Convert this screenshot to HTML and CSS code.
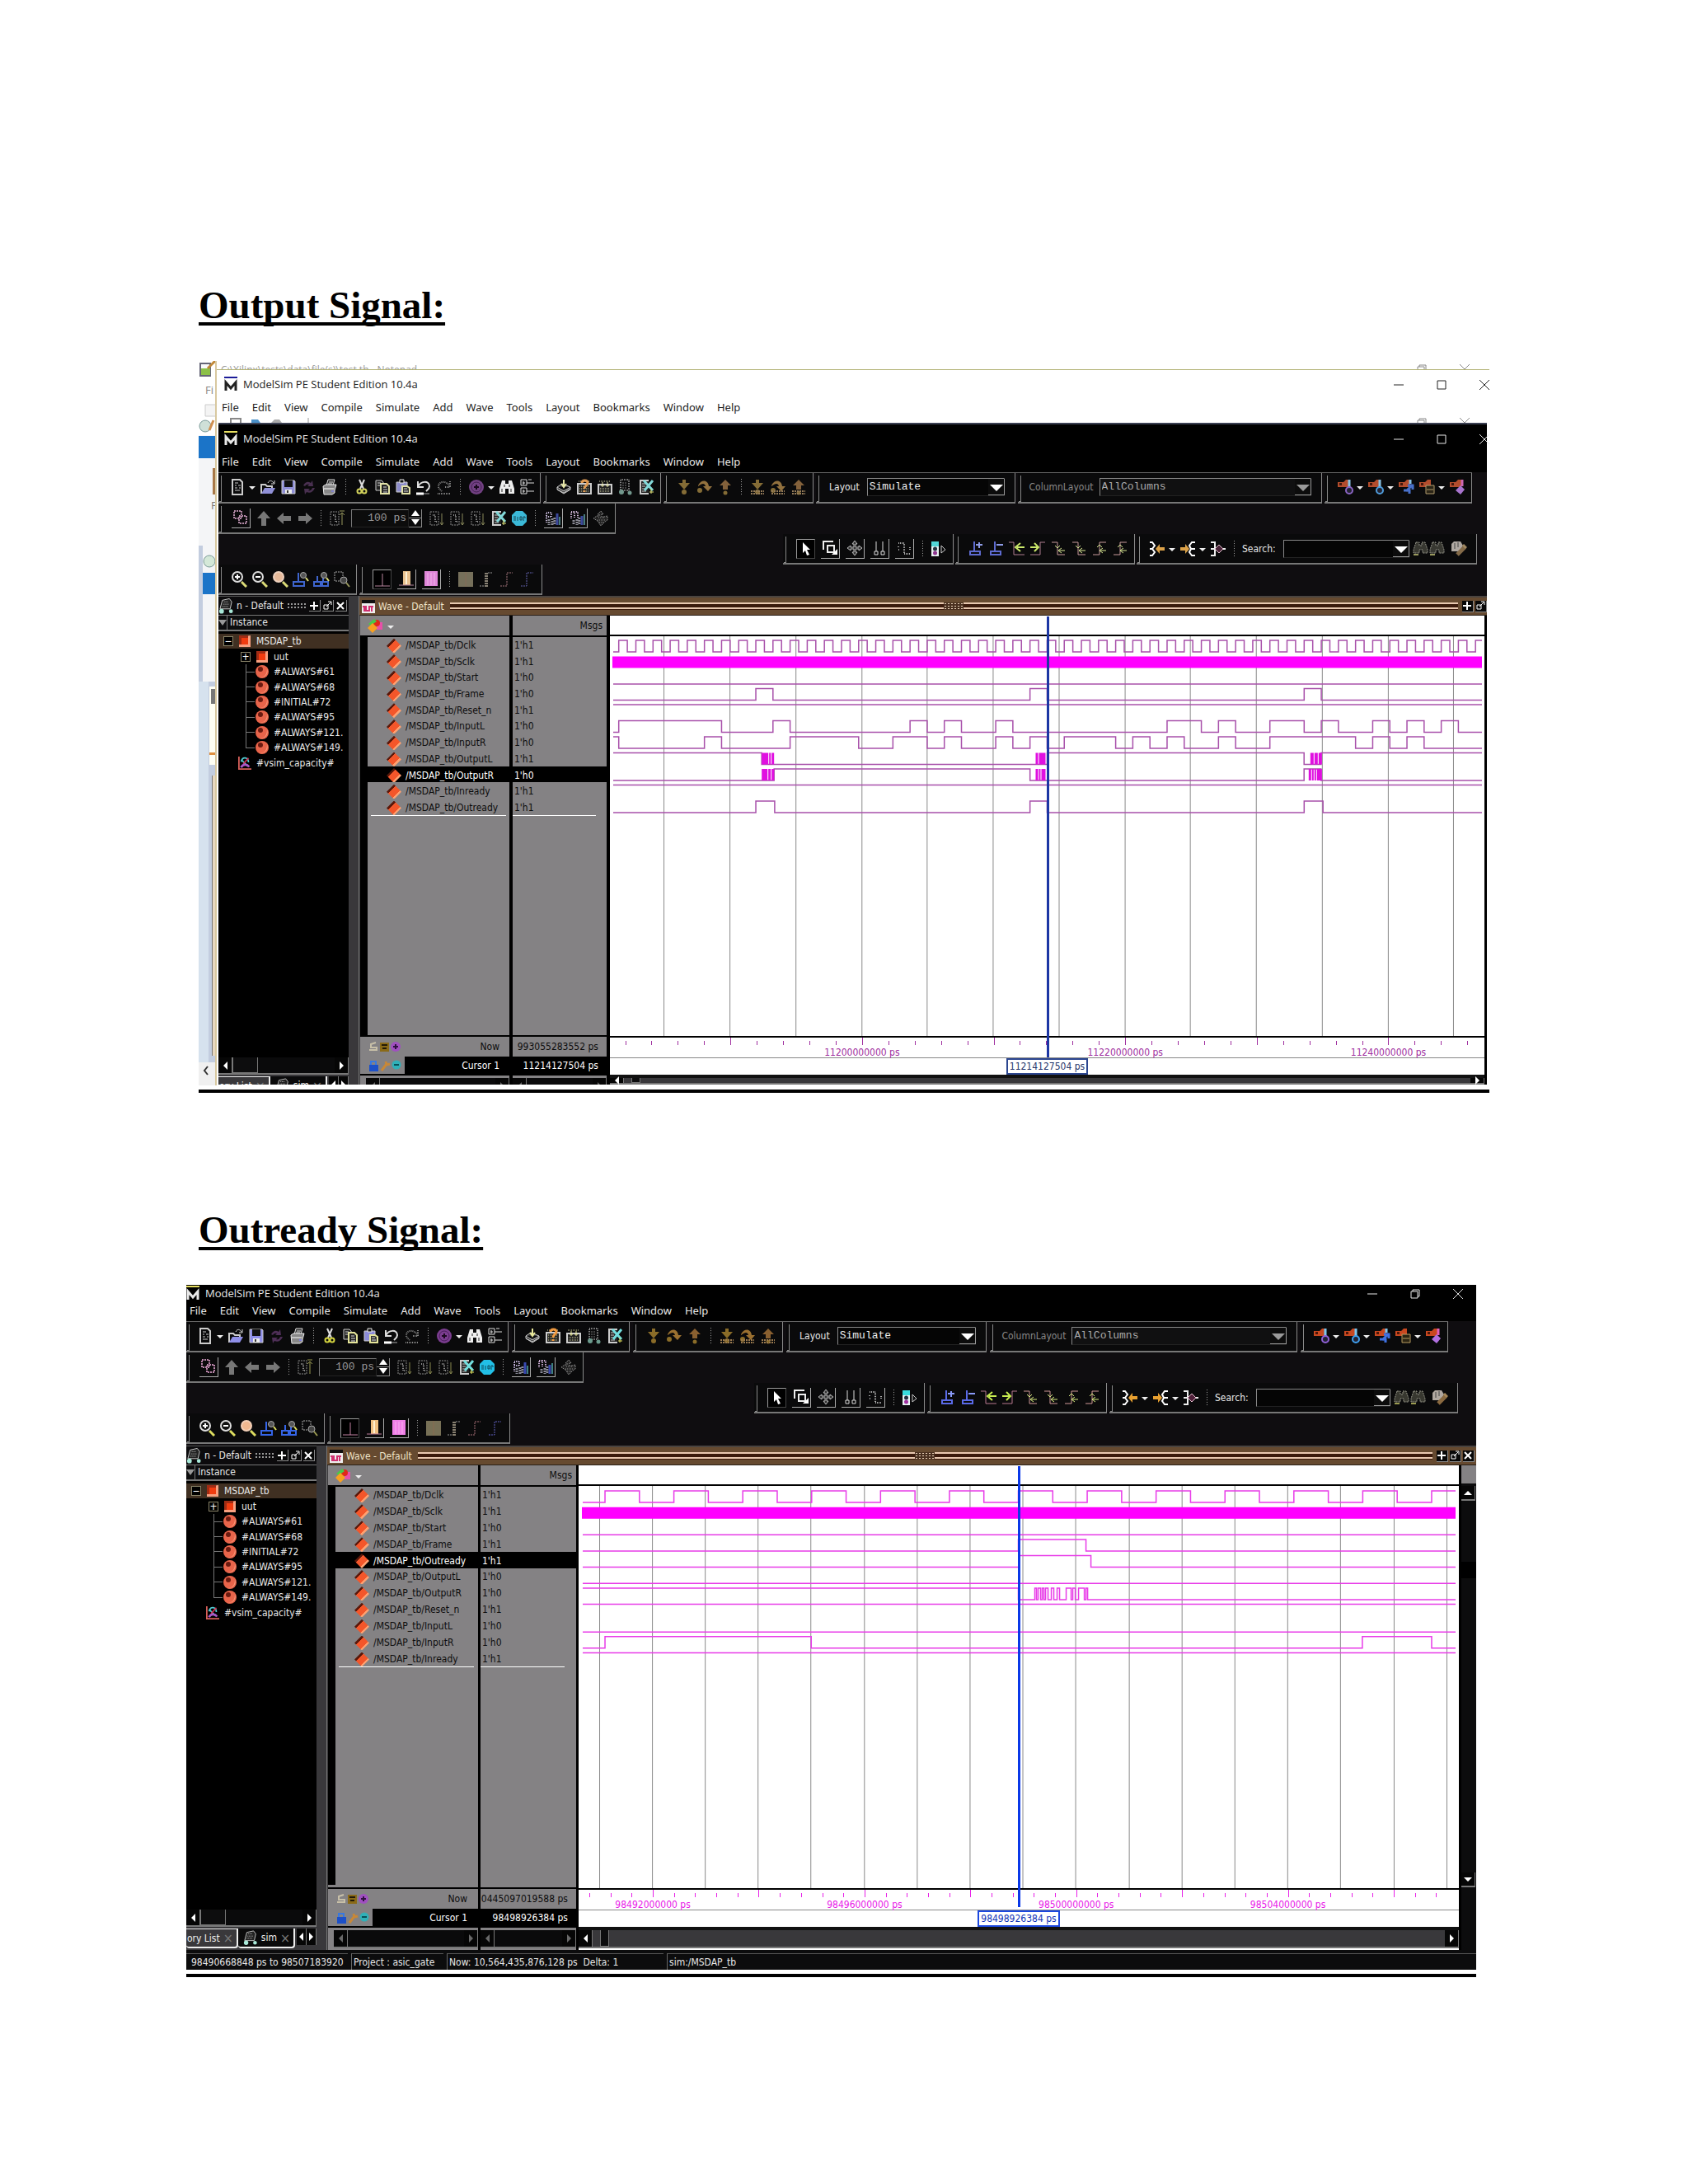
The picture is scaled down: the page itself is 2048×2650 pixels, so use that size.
FILE: index.html
```html
<!DOCTYPE html>
<html lang="en">
<head>
    <meta charset="UTF-8">
    <meta name="viewport" content="width=device-width, initial-scale=1.0">
    <title>Output and Outready Signals</title>
    <link rel="stylesheet" href="styles.css">
</head>
<body>
    <!-- Icon set -->
    <svg class="sprite" aria-hidden="true">
        <symbol id="i-logo" viewBox="0 0 16 18"><path class="bar" d="M0 0h16v2H0z"/><path fill="none" stroke="currentColor" stroke-width="3" d="M2 17V7l6 7 6-7v10"/></symbol>
        <symbol id="i-min" viewBox="0 0 12 12"><path d="M0 6h12" stroke="currentColor"/></symbol>
        <symbol id="i-max" viewBox="0 0 12 12"><path d="M1 1h10v10H1z" fill="none" stroke="currentColor"/></symbol>
        <symbol id="i-restore" viewBox="0 0 12 12"><path d="M1 3h8v8H1zM3 3V1h8v8H9" fill="none" stroke="currentColor"/></symbol>
        <symbol id="i-close" viewBox="0 0 12 12"><path d="M0 0l12 12M12 0L0 12" stroke="currentColor"/></symbol>

        <symbol id="i-new" viewBox="0 0 20 20"><path d="M4 1h9l3 3v15H4z" fill="none" stroke="#ccc" stroke-width="2"/><path d="M7 5h4M7 8h2m2 0h3M7 11h3m2 0h2M7 14h6" stroke="#ccc"/></symbol>
        <symbol id="i-open" viewBox="0 0 20 20"><path d="M2 18V7h5l2 2h6v3" fill="none" stroke="#ccc" stroke-width="2"/><path d="M2 18l4-7h13l-4 7z" fill="#8f8fe8"/><path d="M10 5c2-4 5-3 7 0m1-3v4h-4" fill="none" stroke="#ddd"/></symbol>
        <symbol id="i-save" viewBox="0 0 20 20"><path d="M2 2h15l1 1v15H2z" fill="#8f8fe8" stroke="#ccc"/><path d="M5 2h10v8H5z" fill="#111"/><path d="M6 13h8v5H6z" fill="#eee"/><path d="M8 14h2v3H8z" fill="#333"/></symbol>
        <symbol id="i-reload" viewBox="0 0 20 20"><path d="M3 8c3-5 6-5 9-3l2-3 1 7H8l2-2C7 6 6 8 5 9zM17 11c-2 5-6 7-10 5l-2 3-1-7h7l-2 2c3 1 4-1 5-3z" fill="#4d2e56"/></symbol>
        <symbol id="i-print" viewBox="0 0 20 20"><path d="M6 8l2-7h8l-2 7" fill="#333" stroke="#ddd"/><path d="M9 4h5M8 6h5" stroke="#ddd"/><path d="M2 9l3-2h13l-2 7v3l-3 2H3z" fill="#888" stroke="#eee"/><path d="M3 12h12" stroke="#fff"/><path d="M12 15h3" stroke="#7f7fe0" stroke-width="2"/></symbol>
        <symbol id="i-cut" viewBox="0 0 20 20"><path d="M7 1l5 11M13 1L8 12" stroke="#ddd" stroke-width="2"/><circle cx="7" cy="15" r="2.5" fill="none" stroke="#d5d540" stroke-width="2"/><circle cx="13" cy="15" r="2.5" fill="none" stroke="#d5d540" stroke-width="2"/></symbol>
        <symbol id="i-copy" viewBox="0 0 20 20"><path d="M2 2h7l2 2v10H2z" fill="#222" stroke="#ccc"/><path d="M8 6h7l3 3v9H8z" fill="#222" stroke="#e4e49a" stroke-width="2"/><path d="M4 5h4M4 8h3M11 10h4M11 13h5M11 16h5" stroke="#ddd"/></symbol>
        <symbol id="i-paste" viewBox="0 0 20 20"><path d="M2 4h13v12H2z" fill="#8b8bd8" stroke="#ccc"/><path d="M6 1h5v4H6z" fill="#111" stroke="#eee"/><path d="M9 9h6l3 2v7H9z" fill="#333" stroke="#e4e49a" stroke-width="2"/><path d="M11 12h4M11 15h5" stroke="#ddd"/></symbol>
        <symbol id="i-undo" viewBox="0 0 20 20"><path d="M3 3v7h7M3 10c3-8 14-8 14-1 0 3-2 4-4 6" fill="none" stroke="#ddd" stroke-width="2"/><path d="M1 18h9" stroke="#fff" stroke-width="3"/><path d="M10 18h7" stroke="#aaa"/></symbol>
        <symbol id="i-redo" viewBox="0 0 20 20"><path d="M17 3v7h-7M17 10C14 2 3 2 3 9c0 3 2 4 4 6M2 18h16" fill="none" stroke="#888" stroke-width="2" stroke-dasharray="1 1"/></symbol>
        <symbol id="i-add" viewBox="0 0 20 20"><circle cx="10" cy="10" r="9" fill="#7b3d90"/><circle cx="10" cy="10" r="6" fill="none" stroke="#4a1d5c"/><path d="M10 7v6M7 10h6" stroke="#1b0820" stroke-width="2"/></symbol>
        <symbol id="i-find" viewBox="0 0 20 20"><path d="M4 2h4v4h4V2h4l3 10v6h-7v-6H8v6H1v-6z" fill="#eee"/><path d="M7 7v3m6-3v3M4 12v4m11-4v4" stroke="#222"/></symbol>
        <symbol id="i-tree" viewBox="0 0 20 20"><path d="M2 1h7v7H2zM2 11h7v7H2zM9 5h9M9 15h9M5 3v4M4 5h3M5 13v4M4 15h3M11 1h4" fill="none" stroke="#ddd"/></symbol>
        <symbol id="i-compile" viewBox="0 0 20 20"><path d="M2 10l6-4 10 4-8 5zM2 10v3l8 5 8-5v-3M2 13l8 4 8-5" fill="#333" stroke="#ccc"/><path d="M10 1v8M7 6l3 4 3-4" fill="none" stroke="#e8e89a" stroke-width="2"/></symbol>
        <symbol id="i-ask" viewBox="0 0 20 20"><path d="M2 6h16v12H2z" fill="#222" stroke="#ccc" stroke-width="2"/><path d="M3 3h14M4 9h12M4 12h12M4 15h12" stroke="#d8d8a0" stroke-dasharray="1 1"/><path d="M7 5c0-4 7-4 7 0 0 3-4 3-4 7m0 2v2" fill="none" stroke="#f09a40" stroke-width="3"/></symbol>
        <symbol id="i-build" viewBox="0 0 20 20"><path d="M2 7h16v11H2z" fill="#222" stroke="#ccc" stroke-width="2"/><path d="M3 3h14M4 12h12M4 15h12" stroke="#d8d8a0" stroke-dasharray="1 1"/><path d="M7 4v6m6-6v6M5 8h4m2 0h4" stroke="#e8e89a"/></symbol>
        <symbol id="i-sim" viewBox="0 0 20 20"><path d="M4 1h10v13H4z" fill="none" stroke="#888" stroke-width="2" stroke-dasharray="1 1"/><path d="M7 4v9m3-9v9" stroke="#777" stroke-dasharray="2 1"/><circle cx="5" cy="16" r="3" fill="#6b9a8c"/><circle cx="15" cy="17" r="2.5" fill="#6b9a8c"/></symbol>
        <symbol id="i-break" viewBox="0 0 20 20"><path d="M13 2H3v16h10" fill="#222" stroke="#ccc" stroke-width="2"/><path d="M5 6h6M5 9h4M5 12h6M5 15h5" stroke="#ccc"/><path d="M7 2l11 12M18 2L8 14" stroke="#72dede" stroke-width="3"/><path d="M16 12v6m-2-2h5" stroke="#e8e860"/></symbol>
        <symbol id="i-into" viewBox="0 0 20 20"><path d="M8 1h4v4h5l-7 8-7-8h5z" fill="#8a6c28"/><circle cx="10" cy="16" r="3" fill="#8a6c28"/></symbol>
        <symbol id="i-over" viewBox="0 0 20 20"><path d="M2 8c4-8 12-7 13 1h4l-5 6-6-6h3c-1-4-4-4-9 0z" fill="#9a7030"/><circle cx="4" cy="14" r="3" fill="#8a6c28"/></symbol>
        <symbol id="i-out" viewBox="0 0 20 20"><path d="M10 1l7 7h-4v5H7V8H3z" fill="#8a6030"/><circle cx="10" cy="17" r="2.5" fill="#8a6c28"/></symbol>
        <symbol id="i-base" viewBox="0 0 20 20"><path d="M2 15h16M2 18h16" stroke="#9b7b50" stroke-width="2" stroke-dasharray="2 1"/></symbol>
        <symbol id="i-thermo" viewBox="0 0 20 20"><path d="M1 4h7l3-3h4v9H1z" fill="#c84820"/><path d="M3 5h3v3H3z" fill="#4a1608"/><path d="M15 1v9" stroke="#7cc4ee" stroke-width="3"/><circle cx="15" cy="14" r="4" stroke="currentColor" stroke-width="2" fill="#223"/></symbol>
        <symbol id="i-thermo-edit" viewBox="0 0 20 20"><path d="M1 4h7l3-3h4v9H1z" fill="#c84820"/><path d="M3 5h3v3H3z" fill="#4a1608"/><path d="M15 1v5" stroke="#7cc4ee" stroke-width="3"/><path d="M18 7l-8 8M7 14h7v4M12 8h6v5" stroke="#3f70e0" stroke-width="3" fill="none"/></symbol>
        <symbol id="i-thermo-save" viewBox="0 0 20 20"><path d="M1 4h7l3-3h4v9H1z" fill="#c84820"/><path d="M3 5h3v3H3z" fill="#4a1608"/><path d="M9 8h10v10H9z" fill="#2b2412" stroke="#b89c60"/><path d="M10 13h8" stroke="#b89c60"/></symbol>
        <symbol id="i-thermo-star" viewBox="0 0 20 20"><path d="M1 4h7l3-3h4v9H1z" fill="#c84820"/><path d="M3 5h3v3H3z" fill="#4a1608"/><path d="M14 8l5 5-5 6-6-5z" fill="#b070e0"/><path d="M16 1v8" stroke="#e060c0" stroke-width="3"/></symbol>

        <symbol id="i-restart" viewBox="0 0 20 20"><path d="M2 2h9v9H2zM8 8h9v9H8z" fill="none" stroke="#b884a8" stroke-width="2" stroke-dasharray="2 1"/></symbol>
        <symbol id="i-up" viewBox="0 0 20 20"><path d="M10 1l8 9h-5v9H7v-9H2z" fill="#777"/></symbol>
        <symbol id="i-left" viewBox="0 0 20 20"><path d="M1 10l8-7v4h9v6H9v4z" fill="#777"/></symbol>
        <symbol id="i-right" viewBox="0 0 20 20"><path d="M19 10l-8-7v4H2v6h9v4z" fill="#777"/></symbol>
        <symbol id="i-run" viewBox="0 0 20 20"><path d="M2 2h10v16H2z" fill="none" stroke="#888" stroke-dasharray="2 1"/><path d="M5 6h3v8h3" fill="none" stroke="#888" stroke-width="2" stroke-dasharray="1 1"/><path d="M16 4v14m-2-3l2 3 2-3" fill="none" stroke="#8a8a50"/></symbol>
        <symbol id="i-runup" viewBox="0 0 20 20"><path d="M2 2h10v16H2z" fill="none" stroke="#888" stroke-dasharray="2 1"/><path d="M5 6h3v8h3" fill="none" stroke="#888" stroke-width="2" stroke-dasharray="1 1"/><path d="M16 18V3M13 6l3-3 3 3M13 1h6" fill="none" stroke="#9a9a50"/></symbol>
        <symbol id="i-stop" viewBox="0 0 20 20"><path d="M6 1h8l5 5v8l-5 5H6l-5-5V6z" fill="#22bfe6"/><path d="M3 8h3M3 10h3M3 12h3M8 8v5M11 8h2v4h-2zM15 13V8h2v2" fill="none" stroke="#0b4a5c"/></symbol>
        <symbol id="i-profile" viewBox="0 0 20 20"><path d="M2 16V4h6v5H2" fill="none" stroke="#c0b0d8" stroke-width="2" stroke-dasharray="1 1"/><path d="M5 12v7m4-8v8m3-9v9" stroke="#8a8a98" stroke-width="3" stroke-dasharray="2 1"/><path d="M15 5v14" stroke="#3848b0" stroke-width="3"/><path d="M18 9v10" stroke="#3f8080" stroke-width="2"/></symbol>
        <symbol id="i-memory" viewBox="0 0 20 20"><path d="M2 11V3h4v7m0-7h4v8" fill="none" stroke="#d0b0d8" stroke-width="2" stroke-dasharray="1 1"/><path d="M5 13v6m4-7v7m3-9v9" stroke="#8a8a98" stroke-width="3" stroke-dasharray="2 1"/><path d="M15 8v11" stroke="#3848b0" stroke-width="3"/><path d="M18 6v13" stroke="#3f8080" stroke-width="2"/></symbol>
        <symbol id="i-diamond" viewBox="0 0 20 20"><path d="M10 1l3 4h-2v3h3l4-1v5l-3 2-5 5-4-6-5-3 4-3h3V5H6z" fill="#222" stroke="#888" stroke-dasharray="2 1"/><path d="M7 9h7M6 12h9M8 15h5" stroke="#888" stroke-dasharray="1 1"/></symbol>

        <symbol id="i-pointer" viewBox="0 0 20 20"><path d="M6 2l9 9h-4l3 6-3 1-2-6-3 3z" fill="#fff"/></symbol>
        <symbol id="i-zoombox" viewBox="0 0 20 20"><path d="M2 12V2h12M7 7h8v8H7z" fill="none" stroke="#eee" stroke-width="2"/><path d="M12 18h7v-7z" fill="#fff"/></symbol>
        <symbol id="i-pan" viewBox="0 0 20 20"><path d="M10 1l3 4h-2v4h4V7l4 3-4 3v-2h-4v4h2l-3 4-3-4h2v-4H5v2l-4-3 4-3v2h4V5H7z" fill="#333" stroke="#bbb"/></symbol>
        <symbol id="i-cursors" viewBox="0 0 20 20"><path d="M6 2v12m8-12v12M4 14h4v4H4zM12 14h4v4h-4z" fill="none" stroke="#ddd"/></symbol>
        <symbol id="i-edit" viewBox="0 0 20 20"><path d="M3 4h7v13h8M3 12h2M3 8v1M17 9v3" fill="none" stroke="#aaa" stroke-width="2" stroke-dasharray="1 1"/></symbol>
        <symbol id="i-lights" viewBox="0 0 20 20"><path d="M1 1h9v18H1z" fill="#e8f4f4"/><path d="M1 1h9v6H1z" fill="#38dede"/><circle cx="5.500" cy="10" r="2.500" fill="#203040"/><circle cx="5.500" cy="15" r="2.500" fill="#a030a0"/><path d="M13 6v9l5-4z" fill="none" stroke="#ccc"/></symbol>
        <symbol id="i-curadd" viewBox="0 0 20 20"><path d="M8 1v12M3 13h12v4H3z" fill="none" stroke="#5a6ae8" stroke-width="2"/><path d="M14 2v7m-4-4h8" stroke="#8a9af8" stroke-width="2"/></symbol>
        <symbol id="i-curdel" viewBox="0 0 20 20"><path d="M8 1v12M3 13h12v4H3z" fill="none" stroke="#5a6ae8" stroke-width="2"/><path d="M10 5h8" stroke="#8a9af8" stroke-width="2"/></symbol>
        <symbol id="i-prev" viewBox="0 0 20 20"><path d="M0 2h6v15h13" fill="none" stroke="#b87890"/><path d="M19 8h-9m4-5L8 8l6 5" fill="none" stroke="#c8ec50" stroke-width="2"/></symbol>
        <symbol id="i-next" viewBox="0 0 20 20"><path d="M19 2h-6v15H1" fill="none" stroke="#b87890"/><path d="M1 8h9M6 3l5 5-5 5" fill="none" stroke="#c8ec50" stroke-width="2"/></symbol>
        <symbol id="i-fall" viewBox="0 0 20 20"><path d="M2 2h7v15h9" fill="none" stroke="#d09898"/><path d="M18 12h-7m3-3l-4 3 4 3M6 6l3 3 3-3" fill="none" stroke="#d8ec80"/></symbol>
        <symbol id="i-rise" viewBox="0 0 20 20"><path d="M2 17h8V2h8" fill="none" stroke="#d09898"/><path d="M18 12h-7m3-3l-4 3 4 3M7 8l3-3 3 3" fill="none" stroke="#d8ec80"/></symbol>
        <symbol id="i-expand" viewBox="0 0 20 20"><path d="M1 2h3l3 4-3 4 3 4-3 4H1M1 10h3" fill="none" stroke="#fff" stroke-width="2"/><path d="M8 10l5-6v4h6v4h-6v4z" fill="#e8a030"/></symbol>
        <symbol id="i-collapse" viewBox="0 0 20 20"><path d="M19 2h-4l-3 4 2 4-2 4 3 4h4M14 10h5" fill="none" stroke="#fff" stroke-width="2"/><path d="M12 10L7 4v4H1v4h6v4z" fill="#e8a030"/></symbol>
        <symbol id="i-branch" viewBox="0 0 20 20"><path d="M1 2h5v16H1M1 10h18" fill="none" stroke="#eee" stroke-width="2"/><path d="M11 5l5 5-5 5-5-5z" fill="#50203a" stroke="#e8c0d0"/></symbol>
        <symbol id="i-findoff" viewBox="0 0 20 20"><path d="M4 2h4v4h3V2h4l3 9v4h-6v-4H8v4H1v-4z" fill="#383830" stroke="#98988a" stroke-dasharray="2 1"/><path d="M1 17h6" stroke="#9a9a50" stroke-width="2"/></symbol>
        <symbol id="i-wrench" viewBox="0 0 20 20"><path d="M1 4l3-3h8l3 5-4 7H1z" fill="#b0a8a0"/><path d="M5 3v7M9 2v6" stroke="#444"/><path d="M8 17l9-9" stroke="#8a6a40" stroke-width="5"/><path d="M15 5l4 4" stroke="#a88858" stroke-width="3"/></symbol>

        <symbol id="i-zoom" viewBox="0 0 20 20"><circle cx="8" cy="7" r="6" fill="#111" stroke="#ddd" stroke-width="2"/><path d="M13 13l6 6" stroke="#dede60" stroke-width="3"/></symbol>
        <symbol id="i-zoomfull" viewBox="0 0 20 20"><circle cx="8" cy="7" r="6" fill="#f0b890" stroke="#f4d0b8" stroke-width="2"/><path d="M13 13l6 6" stroke="#dede60" stroke-width="3"/></symbol>
        <symbol id="i-zoomcur" viewBox="0 0 20 20"><path d="M7 2v11M1 13h13v5H1z" fill="none" stroke="#3565e8" stroke-width="2"/><circle cx="13" cy="5" r="3.500" fill="#555" stroke="#aaa"/><path d="M16 8l3 4" stroke="#dede60" stroke-width="2"/></symbol>
        <symbol id="i-zoomcurs" viewBox="0 0 20 20"><path d="M5 6v7M12 8v5M1 13h8v5H1zM11 13h7v5h-7z" fill="none" stroke="#3565e8" stroke-width="2"/><circle cx="13" cy="5" r="3.500" fill="#555" stroke="#aaa"/><path d="M16 8l3 4" stroke="#dede60" stroke-width="2"/></symbol>
        <symbol id="i-zoomlast" viewBox="0 0 20 20"><path d="M1 12V1h10v11z" fill="none" stroke="#aaa" stroke-dasharray="2 1"/><circle cx="12" cy="11" r="4" fill="#444" stroke="#aaa"/><path d="M15 14l4 5" stroke="#9a9a50" stroke-width="2"/></symbol>
        <symbol id="i-w1" viewBox="0 0 20 20"><path d="M1 18h18" stroke="#c080a0"/><path d="M10 3v15" stroke="#c080a0"/></symbol>
        <symbol id="i-w2" viewBox="0 0 20 20"><path d="M6 1h9v17H6z" fill="#f0c080"/><path d="M10 2v15" stroke="#fff0d0" stroke-width="2"/><path d="M1 18h18" stroke="#c080a0"/></symbol>
        <symbol id="i-w3" viewBox="0 0 20 20"><path d="M2 1h16v18H2z" fill="#f080e8"/><path d="M6 3v15m4-15v15m4-15v15" stroke="#f8b0f0"/></symbol>
        <symbol id="i-w4" viewBox="0 0 20 20"><path d="M1 1h18v18H1z" fill="#777056"/><path d="M10 1v18" stroke="#8a6a50"/></symbol>
        <symbol id="i-w5" viewBox="0 0 20 20"><path d="M2 18h6M12 2h6" stroke="#999" stroke-dasharray="2 1"/><path d="M10 2v17" stroke="#888070" stroke-width="4" stroke-dasharray="2 1"/></symbol>
        <symbol id="i-w6" viewBox="0 0 20 20"><path d="M2 18h8V2h7" fill="none" stroke="#a87078" stroke-dasharray="2 1"/></symbol>
        <symbol id="i-w7" viewBox="0 0 20 20"><path d="M2 18h7V2h8" fill="none" stroke="#6060c0" stroke-dasharray="2 1"/></symbol>

        <symbol id="i-car" viewBox="0 0 20 20"><path d="M5 3l9-2 3 4-2 9H2z" fill="#222" stroke="#ccc"/><path d="M7 5h6M6 8h7M5 11h7" stroke="#ccc" stroke-dasharray="1 1"/><circle cx="4" cy="17" r="3" fill="#a8e8d8"/><circle cx="16" cy="17" r="2.500" fill="#a8e8d8"/></symbol>
        <symbol id="i-plus" viewBox="0 0 12 12"><path d="M6 1v10M1 6h10" stroke="#fff" stroke-width="2"/></symbol>
        <symbol id="i-undock" viewBox="0 0 12 12"><path d="M2 5h5v5H2zM5 7l5-5M7 1h4v4" fill="none" stroke="#fff"/></symbol>
        <symbol id="i-x" viewBox="0 0 12 12"><path d="M2 2l8 8M10 2l-8 8" stroke="#fff" stroke-width="2"/></symbol>
        <symbol id="i-wave" viewBox="0 0 16 16"><path d="M0 0h16v16H0z" fill="#eee"/><path d="M0 0h16v4H0z" fill="#111"/><path d="M1 8h4v5h4V8h5M3 14V9M12 8v6" fill="none" stroke="#d03070" stroke-width="2"/></symbol>
        <symbol id="i-objects" viewBox="0 0 20 18"><path d="M12 5h7v9h-7z" fill="#e850a8"/><circle cx="12" cy="6" r="4" fill="#e02818"/><path d="M2 7l7-6 3 3-7 5z" fill="#48c848"/><path d="M7 6l6 6-6 6-6-6z" fill="#f8a020"/></symbol>
        <symbol id="i-module" viewBox="0 0 14 14"><path d="M0 2L14 0v14H0z" fill="#f8a080"/><path d="M3 3h8v8H3z" fill="#f03c10"/><path d="M0 0h11v3H3v8H0z" fill="#a02c14"/></symbol>
        <symbol id="i-process" viewBox="0 0 16 16"><circle cx="8" cy="8" r="8" fill="#e8644a"/><circle cx="6" cy="5" r="3" fill="#6a1a10"/><path d="M14 4a8 8 0 01-9 11c6 0 9-4 9-11z" fill="#f89878"/></symbol>
        <symbol id="i-capacity" viewBox="0 0 18 18"><path d="M1 0v17h17" fill="none" stroke="#d8605a" stroke-width="2"/><path d="M4 7c2-8 10-6 10 1M4 4l9 9" fill="none" stroke="#50c8d0" stroke-width="2"/><path d="M14 2L7 10" stroke="#d03050" stroke-width="2"/><path d="M4 15c2-5 8-5 11-1" fill="none" stroke="#a858c8" stroke-width="3"/></symbol>
        <symbol id="i-footnow" viewBox="0 0 40 14"><path d="M1 11h9V8H3V4l6-2" fill="none" stroke="#c8c0a8" stroke-width="2"/><path d="M14 2h11v11H14z" fill="#8a6a18"/><path d="M16 5h7M17 9h5" stroke="#221a08" stroke-width="2"/><circle cx="33" cy="7" r="6" fill="#a050c0"/><path d="M33 4v6m-3-3h6" stroke="#301040" stroke-width="2"/></symbol>
        <symbol id="i-footcur" viewBox="0 0 40 14"><path d="M1 6h11v8H1z" fill="#1c50c8"/><path d="M3 6V2h6v4" fill="none" stroke="#3878e0" stroke-width="2"/><path d="M16 13l6-8M21 2l1 4 4-1" fill="none" stroke="#c88838" stroke-width="3"/><circle cx="34" cy="6" r="5.500" fill="#30b0b8"/><path d="M31 6h6" stroke="#085058" stroke-width="2"/></symbol>
    </svg>

    <!-- Toolbars, shared by every simulator window -->
    <template id="toolbar-rows">
        <div class="tool-row row-main">
            <div class="group first">
                <button class="tool" aria-label="New"><svg><use href="#i-new"/></svg></button><span class="drop"></span>
                <button class="tool" aria-label="Open"><svg><use href="#i-open"/></svg></button>
                <button class="tool" aria-label="Save"><svg><use href="#i-save"/></svg></button>
                <button class="tool" aria-label="Reload"><svg><use href="#i-reload"/></svg></button>
                <button class="tool" aria-label="Print"><svg><use href="#i-print"/></svg></button>
                <span class="sep"></span>
                <button class="tool" aria-label="Cut"><svg><use href="#i-cut"/></svg></button>
                <button class="tool" aria-label="Copy"><svg><use href="#i-copy"/></svg></button>
                <button class="tool" aria-label="Paste"><svg><use href="#i-paste"/></svg></button>
                <button class="tool" aria-label="Undo"><svg><use href="#i-undo"/></svg></button>
                <button class="tool" aria-label="Redo"><svg><use href="#i-redo"/></svg></button>
                <span class="sep"></span>
                <button class="tool" aria-label="Add"><svg><use href="#i-add"/></svg></button><span class="drop"></span>
                <button class="tool" aria-label="Find"><svg><use href="#i-find"/></svg></button>
                <button class="tool" aria-label="Expand tree"><svg><use href="#i-tree"/></svg></button>
            </div>
            <div class="group">
                <button class="tool" aria-label="Compile"><svg><use href="#i-compile"/></svg></button>
                <button class="tool" aria-label="Compile out of date"><svg><use href="#i-ask"/></svg></button>
                <button class="tool" aria-label="Compile all"><svg><use href="#i-build"/></svg></button>
                <button class="tool" aria-label="Simulate"><svg><use href="#i-sim"/></svg></button>
                <button class="tool" aria-label="Break"><svg><use href="#i-break"/></svg></button>
            </div>
            <div class="group">
                <button class="tool" aria-label="Step into"><svg><use href="#i-into"/></svg></button>
                <button class="tool" aria-label="Step over"><svg><use href="#i-over"/></svg></button>
                <button class="tool" aria-label="Step out"><svg><use href="#i-out"/></svg></button>
                <span class="sep"></span>
                <button class="tool" aria-label="Step into current"><svg><use href="#i-into"/><use href="#i-base"/></svg></button>
                <button class="tool" aria-label="Step over current"><svg><use href="#i-over"/><use href="#i-base"/></svg></button>
                <button class="tool" aria-label="Step out current"><svg><use href="#i-out"/><use href="#i-base"/></svg></button>
            </div>
            <div class="group group-layout">
                <label class="pick">Layout <span class="combo"><select><option>Simulate</option></select></span></label>
            </div>
            <div class="group group-columns">
                <label class="pick dim">ColumnLayout <span class="combo"><select disabled><option>AllColumns</option></select></span></label>
            </div>
            <div class="group">
                <button class="tool violet" aria-label="Add bookmark"><svg><use href="#i-thermo"/></svg></button><span class="drop"></span>
                <button class="tool sky" aria-label="Go to bookmark"><svg><use href="#i-thermo"/></svg></button><span class="drop"></span>
                <button class="tool" aria-label="Edit bookmark"><svg><use href="#i-thermo-edit"/></svg></button>
                <button class="tool" aria-label="Save bookmark"><svg><use href="#i-thermo-save"/></svg></button><span class="drop"></span>
                <button class="tool" aria-label="Bookmarks"><svg><use href="#i-thermo-star"/></svg></button>
            </div>
        </div>
        <div class="tool-row">
            <div class="group">
                <button class="tool bevel" aria-label="Restart"><svg><use href="#i-restart"/></svg></button>
                <button class="tool" aria-label="Up"><svg><use href="#i-up"/></svg></button>
                <button class="tool" aria-label="Back"><svg><use href="#i-left"/></svg></button>
                <button class="tool" aria-label="Forward"><svg><use href="#i-right"/></svg></button>
                <span class="sep"></span>
                <button class="tool" aria-label="Run length"><svg><use href="#i-runup"/></svg></button>
                <span class="stepper"><input class="run-time" aria-label="Run time" value="100 ps"><span class="spin"></span></span>
                <button class="tool" aria-label="Run"><svg><use href="#i-run"/></svg></button>
                <button class="tool" aria-label="Continue run"><svg><use href="#i-run"/></svg></button>
                <button class="tool" aria-label="Run all"><svg><use href="#i-run"/></svg></button>
                <button class="tool" aria-label="Break run"><svg><use href="#i-break"/></svg></button>
                <button class="tool" aria-label="Stop"><svg><use href="#i-stop"/></svg></button>
                <span class="sep"></span>
                <button class="tool bevel" aria-label="Performance profiling"><svg><use href="#i-profile"/></svg></button>
                <button class="tool bevel" aria-label="Memory profiling"><svg><use href="#i-memory"/></svg></button>
                <button class="tool" aria-label="Edit breakpoints"><svg><use href="#i-diamond"/></svg></button>
            </div>
        </div>
        <div class="tool-row row-wave">
            <div class="group">
                <button class="tool bevel pressed" aria-label="Select mode"><svg><use href="#i-pointer"/></svg></button>
                <button class="tool bevel" aria-label="Zoom mode"><svg><use href="#i-zoombox"/></svg></button>
                <button class="tool bevel" aria-label="Pan mode"><svg><use href="#i-pan"/></svg></button>
                <button class="tool bevel" aria-label="Two cursor mode"><svg><use href="#i-cursors"/></svg></button>
                <button class="tool bevel" aria-label="Edit mode"><svg><use href="#i-edit"/></svg></button>
                <span class="sep"></span>
                <button class="tool" aria-label="Stop drawing"><svg><use href="#i-lights"/></svg></button>
            </div>
            <div class="group">
                <button class="tool" aria-label="Insert cursor"><svg><use href="#i-curadd"/></svg></button>
                <button class="tool" aria-label="Delete cursor"><svg><use href="#i-curdel"/></svg></button>
                <button class="tool" aria-label="Previous transition"><svg><use href="#i-prev"/></svg></button>
                <button class="tool" aria-label="Next transition"><svg><use href="#i-next"/></svg></button>
                <button class="tool" aria-label="Previous falling edge"><svg><use href="#i-fall"/></svg></button>
                <button class="tool" aria-label="Next falling edge"><svg><use href="#i-fall"/></svg></button>
                <button class="tool" aria-label="Previous rising edge"><svg><use href="#i-rise"/></svg></button>
                <button class="tool" aria-label="Next rising edge"><svg><use href="#i-rise"/></svg></button>
            </div>
            <div class="group group-search">
                <button class="tool" aria-label="Expand time"><svg><use href="#i-expand"/></svg></button><span class="drop"></span>
                <button class="tool" aria-label="Collapse time"><svg><use href="#i-collapse"/></svg></button><span class="drop"></span>
                <button class="tool" aria-label="Expanded mode"><svg><use href="#i-branch"/></svg></button>
                <span class="sep"></span>
                <label class="pick">Search: <span class="combo"><input class="search"></span></label>
                <button class="tool tight" aria-label="Search backward"><svg><use href="#i-findoff"/></svg></button>
                <button class="tool tight" aria-label="Search forward"><svg><use href="#i-findoff"/></svg></button>
                <button class="tool wide" aria-label="Search options"><svg><use href="#i-wrench"/></svg></button>
            </div>
        </div>
        <div class="tool-row">
            <div class="group">
                <button class="tool" aria-label="Zoom in"><svg><use href="#i-zoom"/><path d="M8 4v6M5 7h6" stroke="#fff" stroke-width="2"/></svg></button>
                <button class="tool" aria-label="Zoom out"><svg><use href="#i-zoom"/><path d="M5 7h6" stroke="#fff" stroke-width="2"/></svg></button>
                <button class="tool" aria-label="Zoom full"><svg><use href="#i-zoomfull"/></svg></button>
                <button class="tool" aria-label="Zoom in on cursor"><svg><use href="#i-zoomcur"/></svg></button>
                <button class="tool" aria-label="Zoom between cursors"><svg><use href="#i-zoomcurs"/></svg></button>
                <button class="tool" aria-label="Zoom other window"><svg><use href="#i-zoomlast"/></svg></button>
            </div>
            <div class="group">
                <button class="tool bevel pressed" aria-label="No drivers"><svg><use href="#i-w1"/></svg></button>
                <button class="tool bevel" aria-label="Single driver"><svg><use href="#i-w2"/></svg></button>
                <button class="tool bevel" aria-label="All drivers"><svg><use href="#i-w3"/></svg></button>
                <span class="sep"></span>
                <button class="tool" aria-label="Show region"><svg><use href="#i-w4"/></svg></button>
                <button class="tool" aria-label="Show delta"><svg><use href="#i-w5"/></svg></button>
                <button class="tool" aria-label="Show event"><svg><use href="#i-w6"/></svg></button>
                <button class="tool" aria-label="Show edge"><svg><use href="#i-w7"/></svg></button>
            </div>
        </div>
    </template>

    <!-- Design hierarchy tree -->
    <template id="instance-tree">
        <div class="pane-title">
            <svg class="car"><use href="#i-car"/></svg><span class="pane-name">n - Default</span><span class="grip"></span>
            <button class="mini" aria-label="Zoom pane"><svg><use href="#i-plus"/></svg></button>
            <button class="mini" aria-label="Undock pane"><svg><use href="#i-undock"/></svg></button>
            <button class="mini" aria-label="Close pane"><svg><use href="#i-x"/></svg></button>
        </div>
        <div class="instance"><span class="sort"></span>Instance</div>
        <ul class="tree">
            <li class="top"><span class="box">−</span><svg class="mod"><use href="#i-module"/></svg>MSDAP_tb</li>
            <li class="child"><span class="box">+</span><svg class="mod"><use href="#i-module"/></svg>uut</li>
            <li class="child"><span class="twig"></span><svg><use href="#i-process"/></svg>#ALWAYS#61</li>
            <li class="child"><span class="twig"></span><svg><use href="#i-process"/></svg>#ALWAYS#68</li>
            <li class="child"><span class="twig"></span><svg><use href="#i-process"/></svg>#INITIAL#72</li>
            <li class="child"><span class="twig"></span><svg><use href="#i-process"/></svg>#ALWAYS#95</li>
            <li class="child"><span class="twig"></span><svg><use href="#i-process"/></svg>#ALWAYS#121.</li>
            <li class="child last"><span class="twig"></span><svg><use href="#i-process"/></svg>#ALWAYS#149.</li>
            <li class="leaf"><svg><use href="#i-capacity"/></svg>#vsim_capacity#</li>
        </ul>
        <div class="hscroll"><span class="arrow left"></span><span class="thumb"></span><span class="arrow right"></span></div>
        <div class="tabs">
            <a class="tab" href="#memory">ory List <span class="tab-x">×</span></a>
            <a class="tab current" href="#sim"><svg><use href="#i-car"/></svg>sim <span class="tab-x">×</span></a>
            <span class="tab-nav"><span class="arrow left"></span><span class="arrow right"></span></span>
        </div>
    </template>

    <main class="document">
        <h1>Output Signal:</h1>

        <figure class="shot desktop">
            <svg class="behind" viewBox="0 0 24 879" aria-hidden="true">
                <path fill="#f4f5f7" d="M0 0h24v879H0z"/>
                <path fill="#fff" d="M0 0h24v90H0z"/>
                <path fill="#fafafa" stroke="#667" stroke-width="2" d="M2 3h12v15H2z"/><path fill="#8cc048" d="M3 9h11v8H3z"/><path stroke="#c08838" stroke-width="3" d="M11 9l9-9"/>
                <text x="8" y="40" font-size="13" fill="#888">Fi</text>
                <path fill="#f4f4f4" stroke="#ccc" d="M8 53h16v14H8z"/>
                <circle cx="8" cy="79" r="7" fill="#cfe0d8" stroke="#7a9a98"/><path stroke="#d09050" stroke-width="3" d="M13 84l5-12"/>
                <path fill="#1b74c8" d="M0 91h20v27H0z"/>
                <path fill="#a87848" d="M17 130h3v32h-3z"/>
                <text x="15" y="180" font-size="13" fill="#777">F</text>
                <path fill="#c3cddf" d="M0 224h5v655H0z"/>
                <circle cx="13" cy="243" r="7" fill="#d4e8d8" stroke="#7a9a98"/>
                <path fill="#1b74c8" d="M5 257h15v26H5z"/>
                <path fill="#c3cddf" d="M5 389h15v490H5z"/>
                <path fill="#d6e2ee" d="M0 389h12v490H0z"/>
                <path fill="#fffff4" d="M13 395h7v95h-7z"/><path fill="#777" d="M15 398h5v18h-5z"/>
                <path fill="#e09040" d="M13 475h7v3h-7z"/>
                <path fill="#777" d="M16 503h1v340h-1z"/><path fill="#e8d8c0" d="M17 503h3v340h-3z"/>
                <path fill="#f0f0f0" d="M0 851h20v28H0z"/><path fill="none" stroke="#333" stroke-width="2" d="M11 856l-4 5 4 5"/>
            </svg>
            <div class="stack">
                <div class="behind-title">C:\Xilinx\tests\data\file(s)\test.th - Notepad
                    <span class="ghosts"><svg><use href="#i-restore"/></svg><svg><use href="#i-close"/></svg></span>
                </div>
                <section class="window light">
                    <header class="title"><svg class="logo"><use href="#i-logo"/></svg>ModelSim PE Student Edition 10.4a
                        <span class="controls">
                            <button aria-label="Minimize"><svg><use href="#i-min"/></svg></button>
                            <button aria-label="Maximize"><svg><use href="#i-max"/></svg></button>
                            <button aria-label="Close"><svg><use href="#i-close"/></svg></button>
                        </span>
                    </header>
                    <nav class="menu"><a href="#">File</a><a href="#">Edit</a><a href="#">View</a><a href="#">Compile</a><a href="#">Simulate</a><a href="#">Add</a><a href="#">Wave</a><a href="#">Tools</a><a href="#">Layout</a><a href="#">Bookmarks</a><a href="#">Window</a><a href="#">Help</a></nav>
                    <div class="sliver">
                        <svg class="sliver-icons" viewBox="0 0 120 6"><path d="M17 1h12v6H17z" fill="none" stroke="#888" stroke-width="2"/><path d="M42 6V2h8l3 4z" fill="#4a90c8"/><path d="M66 6l4-4h6l3 4z" fill="#aaa"/><path d="M111 0v6" stroke="#999"/></svg>
                        <span class="ghosts"><svg><use href="#i-restore"/></svg><svg><use href="#i-close"/></svg></span>
                    </div>
                </section>
                <section class="window dark output">
                    <header class="title"><svg class="logo"><use href="#i-logo"/></svg>ModelSim PE Student Edition 10.4a
                        <span class="controls">
                            <button aria-label="Minimize"><svg><use href="#i-min"/></svg></button>
                            <button aria-label="Maximize"><svg><use href="#i-max"/></svg></button>
                            <button aria-label="Close"><svg><use href="#i-close"/></svg></button>
                        </span>
                    </header>
                    <nav class="menu"><a href="#">File</a><a href="#">Edit</a><a href="#">View</a><a href="#">Compile</a><a href="#">Simulate</a><a href="#">Add</a><a href="#">Wave</a><a href="#">Tools</a><a href="#">Layout</a><a href="#">Bookmarks</a><a href="#">Window</a><a href="#">Help</a></nav>
                    <div class="toolbars"></div>
                    <div class="panes">
                        <aside class="sim-pane"></aside>
                        <section class="wave-pane">
                            <div class="wave-title"><svg><use href="#i-wave"/></svg>Wave - Default<span class="ridge"></span>
                                <button class="mini" aria-label="Zoom wave"><svg><use href="#i-plus"/></svg></button>
                                <button class="mini" aria-label="Undock wave"><svg><use href="#i-undock"/></svg></button>
                            </div>
                            <div class="wave-body">
                                <div class="signals">
                                    <table class="list">
                                        <thead><tr><th><svg class="objects"><use href="#i-objects"/></svg><span class="drop"></span></th><th>Msgs</th></tr></thead>
                                        <tbody>
                                            <tr><td>/MSDAP_tb/Dclk</td><td>1'h1</td></tr>
                                            <tr><td>/MSDAP_tb/Sclk</td><td>1'h1</td></tr>
                                            <tr><td>/MSDAP_tb/Start</td><td>1'h0</td></tr>
                                            <tr><td>/MSDAP_tb/Frame</td><td>1'h0</td></tr>
                                            <tr><td>/MSDAP_tb/Reset_n</td><td>1'h1</td></tr>
                                            <tr><td>/MSDAP_tb/InputL</td><td>1'h0</td></tr>
                                            <tr><td>/MSDAP_tb/InputR</td><td>1'h0</td></tr>
                                            <tr><td>/MSDAP_tb/OutputL</td><td>1'h1</td></tr>
                                            <tr class="selected"><td>/MSDAP_tb/OutputR</td><td>1'h0</td></tr>
                                            <tr><td>/MSDAP_tb/Inready</td><td>1'h1</td></tr>
                                            <tr><td>/MSDAP_tb/Outready</td><td>1'h1</td></tr>
                                        </tbody>
                                    </table>
                                    <div class="end-mark"><span></span><span></span></div>
                                    <table class="times">
                                        <tr class="now"><td><svg><use href="#i-footnow"/></svg>Now</td><td>993055283552 ps</td></tr>
                                        <tr class="cursor-row"><td><svg><use href="#i-footcur"/></svg>Cursor 1</td><td>11214127504 ps</td></tr>
                                    </table>
                                    <div class="scrolls"><div class="hscroll"><span class="arrow left"></span><span class="arrow right"></span></div><div class="hscroll"><span class="arrow left"></span><span class="arrow right"></span></div></div>
                                </div>
                                <div class="waves">
                                    <div class="wave-head"></div>
                                    <svg class="plot" data-plot="output" preserveAspectRatio="none"></svg>
                                    <div class="ruler" data-ruler="output"></div>
                                    <div class="cursor-track"><span class="cursor-time">11214127504 ps</span></div>
                                    <div class="cursor-line"></div>
                                    <div class="hscroll wave-scroll"><span class="arrow left"></span><span class="thumb"></span><span class="arrow right"></span></div>
                                </div>
                            </div>
                        </section>
                    </div>
                </section>
            </div>
        </figure>
        <hr class="rule">

        <h1 class="second">Outready Signal:</h1>

        <div class="outset">
            <figure class="shot">
                <section class="window dark outready">
                    <header class="title"><svg class="logo"><use href="#i-logo"/></svg>ModelSim PE Student Edition 10.4a
                        <span class="controls">
                            <button aria-label="Minimize"><svg><use href="#i-min"/></svg></button>
                            <button aria-label="Restore"><svg><use href="#i-restore"/></svg></button>
                            <button aria-label="Close"><svg><use href="#i-close"/></svg></button>
                        </span>
                    </header>
                    <nav class="menu"><a href="#">File</a><a href="#">Edit</a><a href="#">View</a><a href="#">Compile</a><a href="#">Simulate</a><a href="#">Add</a><a href="#">Wave</a><a href="#">Tools</a><a href="#">Layout</a><a href="#">Bookmarks</a><a href="#">Window</a><a href="#">Help</a></nav>
                    <div class="toolbars"></div>
                    <div class="panes">
                        <aside class="sim-pane"></aside>
                        <section class="wave-pane">
                            <div class="wave-title"><svg><use href="#i-wave"/></svg>Wave - Default<span class="ridge"></span>
                                <button class="mini" aria-label="Zoom wave"><svg><use href="#i-plus"/></svg></button>
                                <button class="mini" aria-label="Undock wave"><svg><use href="#i-undock"/></svg></button>
                                <button class="mini" aria-label="Close wave"><svg><use href="#i-x"/></svg></button>
                            </div>
                            <div class="wave-body">
                                <div class="signals">
                                    <table class="list">
                                        <thead><tr><th><svg class="objects"><use href="#i-objects"/></svg><span class="drop"></span></th><th>Msgs</th></tr></thead>
                                        <tbody>
                                            <tr><td>/MSDAP_tb/Dclk</td><td>1'h1</td></tr>
                                            <tr><td>/MSDAP_tb/Sclk</td><td>1'h1</td></tr>
                                            <tr><td>/MSDAP_tb/Start</td><td>1'h0</td></tr>
                                            <tr><td>/MSDAP_tb/Frame</td><td>1'h1</td></tr>
                                            <tr class="selected"><td>/MSDAP_tb/Outready</td><td>1'h1</td></tr>
                                            <tr><td>/MSDAP_tb/OutputL</td><td>1'h0</td></tr>
                                            <tr><td>/MSDAP_tb/OutputR</td><td>1'h0</td></tr>
                                            <tr><td>/MSDAP_tb/Reset_n</td><td>1'h1</td></tr>
                                            <tr><td>/MSDAP_tb/InputL</td><td>1'h0</td></tr>
                                            <tr><td>/MSDAP_tb/InputR</td><td>1'h0</td></tr>
                                            <tr><td>/MSDAP_tb/Inready</td><td>1'h1</td></tr>
                                        </tbody>
                                    </table>
                                    <div class="end-mark"><span></span><span></span></div>
                                    <table class="times">
                                        <tr class="now"><td><svg><use href="#i-footnow"/></svg>Now</td><td>0445097019588 ps</td></tr>
                                        <tr class="cursor-row"><td><svg><use href="#i-footcur"/></svg>Cursor 1</td><td>98498926384 ps</td></tr>
                                    </table>
                                    <div class="scrolls"><div class="hscroll"><span class="arrow left"></span><span class="arrow right"></span></div><div class="hscroll"><span class="arrow left"></span><span class="arrow right"></span></div></div>
                                </div>
                                <div class="waves">
                                    <div class="wave-head"></div>
                                    <svg class="plot" data-plot="outready" preserveAspectRatio="none"></svg>
                                    <div class="ruler" data-ruler="outready"></div>
                                    <div class="cursor-track"><span class="cursor-time">98498926384 ps</span></div>
                                    <div class="cursor-line"></div>
                                    <div class="hscroll wave-scroll"><span class="arrow left"></span><span class="thumb"></span><span class="arrow right"></span></div>
                                </div>
                                <div class="vscroll"><span class="arrow up"></span><span class="vthumb"></span><span class="arrow down"></span></div>
                            </div>
                        </section>
                    </div>
                    <footer class="status"><span>98490668848 ps to 98507183920</span><span>Project : asic_gate</span><span>Now: 10,564,435,876,128 ps&nbsp; Delta: 1</span><span>sim:/MSDAP_tb</span></footer>
                </section>
            </figure>
            <hr class="rule">
        </div>
    </main>

    <script src="waves.js"></script>
</body>
</html>
```

FILE: styles.css
```css
*,
*::before,
*::after {
    box-sizing: border-box;
}

body {
    margin: 0;
    background: #fff;
    color: #000;
    font-family: "Liberation Serif", "Times New Roman", serif;
}

.sprite {
    position: absolute;
    width: 0;
    height: 0;
}

.document {
    padding: 342px 241px 252px;
}

h1 {
    margin: 0 0 40px;
    font-size: 47px;
    line-height: 56px;
    text-decoration: underline;
    text-decoration-thickness: 4px;
    text-underline-offset: 5px;
    text-decoration-skip-ink: none;
}

h1.second {
    margin: 138px 0 39px;
}

.shot {
    margin: 0;
    overflow: hidden;
    font-family: "DejaVu Sans Condensed", "DejaVu Sans", sans-serif;
    font-size: 12px;
}

.outset {
    margin: 0 16px 0 -15px;
}

.rule {
    margin: 5px 0 0;
    border: 0;
    height: 4px;
    background: #000;
}

/* Windows behind the simulator */
.desktop {
    display: grid;
    grid-template-columns: 20px 1fr;
}

.behind {
    width: 24px;
    height: 879px;
    font-family: "Open Sans", sans-serif;
}

.stack {
    min-width: 0;
    border-left: 2px solid #d8c8a0;
    background: #fff;
}

.behind-title {
    position: relative;
    height: 10px;
    padding-left: 5px;
    overflow: hidden;
    color: #999;
    font-family: "Open Sans", sans-serif;
    font-size: 12px;
    line-height: 22px;
    white-space: nowrap;
}

.ghosts {
    position: absolute;
    right: 24px;
    top: 4px;
    display: flex;
    gap: 40px;
    color: #888;
}

.ghosts svg {
    width: 12px;
    height: 12px;
}

.sliver {
    position: relative;
    height: 6px;
    overflow: hidden;
}

.sliver-icons {
    display: block;
    width: 120px;
    height: 6px;
}

.sliver .ghosts {
    top: 0;
}

/* Window frame */
.window.light {
    border-top: 1px solid #b4b478;
    background: #fff;
    color: #222;
}

.window.dark {
    background: #0f0d10;
    color: #e8e8e8;
}

.window.output {
    margin: 0 3px 0 2px;
    border-top: 2px solid #3a3f52;
}

.title {
    display: flex;
    align-items: center;
    height: 34px;
    padding-left: 9px;
    font-family: "Open Sans", sans-serif;
    font-size: 13px;
    white-space: nowrap;
}

.output .title {
    padding-left: 7px;
}

.dark .title,
.dark .menu {
    background: #000;
}

.logo {
    width: 16px;
    height: 18px;
    margin-right: 7px;
    fill: #e8e060;
}

.light .logo {
    fill: #1c1c98;
}

.controls {
    display: flex;
    margin-left: auto;
    margin-right: -20px;
}

.output .controls {
    margin-right: -23px;
}

.controls button {
    width: 52px;
    height: 20px;
    padding: 0;
    border: 0;
    background: none;
    color: inherit;
}

.controls svg {
    width: 12px;
    height: 12px;
    vertical-align: middle;
}

.menu {
    display: flex;
    gap: 16px;
    height: 24px;
    padding-left: 6px;
    font-family: "Noto Sans", "Open Sans", sans-serif;
    font-size: 13px;
    line-height: 23px;
}

.output .menu {
    padding-left: 4px;
}

.menu a {
    color: inherit;
    text-decoration: none;
}

/* Toolbars */
.toolbars {
    padding-bottom: 1px;
}

.output .tool svg {
    filter: saturate(0.8);
}

.tool-row {
    display: flex;
    gap: 3px;
    height: 37px;
}

.row-main {
    height: 38px;
    border-top: 1px solid #666;
    margin-right: 18px;
}

.row-main .group {
    padding-bottom: 2px;
}

.row-wave {
    gap: 2px;
    margin: 0 12px 0 685px;
}

.group {
    position: relative;
    display: flex;
    align-items: center;
    padding: 0 5px 0 12px;
    border-right: 1px solid #8a8a8a;
    border-bottom: 2px solid #777;
    background: #0a0a0b;
}

.group.first {
    padding-left: 10px;
    padding-right: 3px;
}

.group::before {
    content: "";
    position: absolute;
    left: 1px;
    top: 3px;
    bottom: 0;
    width: 3px;
    border-right: 1px solid #888;
    border-bottom: 1px solid #888;
}

.group-layout {
    flex: 237 1 0;
    padding-left: 16px;
    padding-right: 12px;
}

.group-columns {
    flex: 382 1 0;
    padding-left: 14px;
    padding-right: 12px;
}

.group-search {
    flex: 1;
}

.tool {
    width: 25px;
    height: 24px;
    padding: 0;
    border: 0;
    background: none;
    display: flex;
    align-items: center;
    justify-content: center;
    flex: none;
}

.tool svg {
    width: 20px;
    height: 20px;
    flex: none;
}

.bevel {
    width: 23px;
    margin: 0 3px 0 4px;
    border-right: 1px solid #aaa;
    border-bottom: 1px solid #aaa;
}

.bevel.pressed {
    border: 1px solid #444;
    border-top-color: #999;
    border-left-color: #999;
    background: #000;
}

.tight {
    width: 20px;
}

.wide {
    width: 32px;
}

.violet {
    color: #9060d8;
}

.sky {
    color: #3fa0f0;
}

.drop {
    display: inline-block;
    width: 12px;
    flex: none;
}

.drop::before {
    content: "";
    display: block;
    width: 0;
    margin: 3px auto 0;
    border: 4px solid transparent;
    border-top: 4px solid #eee;
    border-bottom: 0;
}

.sep {
    width: 14px;
    height: 20px;
    background: repeating-linear-gradient(#999 0 1px, #111 1px 3px) 7px 0 / 1px 100% no-repeat;
    flex: none;
}

.pick {
    display: flex;
    align-items: center;
    gap: 9px;
    width: 100%;
    white-space: nowrap;
}

.group-search .pick {
    width: auto;
    flex: 1;
    padding: 0 4px 0 3px;
}

.pick.dim {
    gap: 7px;
    color: #888;
}

.combo {
    position: relative;
    flex: 1;
    display: flex;
    height: 22px;
}

.combo select,
.search {
    appearance: none;
    width: 100%;
    min-width: 0;
    padding: 0 24px 0 2px;
    border: 1px solid #222;
    border-top-color: #888;
    border-left-color: #888;
    border-radius: 0;
    background: #050505;
    color: #eee;
    font-family: "Liberation Mono", monospace;
    font-size: 13px;
    opacity: 1;
}

.dim select {
    background: #101011;
    color: #aaa;
}

.combo::before {
    content: "";
    position: absolute;
    right: 0;
    top: 1px;
    bottom: 1px;
    width: 20px;
    border-right: 1px solid #999;
    border-bottom: 1px solid #999;
    background: #0c0c0c;
}

.combo::after {
    content: "";
    position: absolute;
    right: 2px;
    top: 8px;
    border: 8px solid transparent;
    border-top: 8px solid #fff;
    border-bottom: 0;
}

.dim .combo::after {
    border-top-color: #999;
}

.stepper {
    display: flex;
    margin: 0 5px;
}

.run-time {
    width: 70px;
    height: 22px;
    padding: 0 2px;
    border: 1px solid #222;
    border-top-color: #777;
    border-left-color: #777;
    background: #0c0c0c;
    color: #999;
    font-family: "Liberation Mono", monospace;
    font-size: 13px;
    text-align: right;
}

.spin {
    width: 16px;
    display: flex;
    flex-direction: column;
    justify-content: space-around;
    align-items: center;
    border-right: 1px solid #888;
    border-bottom: 1px solid #888;
    background: linear-gradient(#888, #888) 0 10px / 100% 1px no-repeat;
}

.spin::before,
.spin::after {
    content: "";
    border: 5px solid transparent;
    border-bottom: 7px solid #fff;
    border-top: 0;
}

.spin::after {
    border: 5px solid transparent;
    border-top: 7px solid #fff;
    border-bottom: 0;
}

/* Panes */
.panes {
    display: grid;
    grid-template-columns: 158px minmax(0, 1fr);
    gap: 12px;
    background: #39383b;
}

.sim-pane {
    display: flex;
    flex-direction: column;
    min-width: 0;
    overflow: hidden;
    background: #000;
}

.pane-title {
    display: flex;
    align-items: center;
    height: 24px;
    padding-right: 2px;
    border-top: 1px solid #555;
    border-bottom: 1px solid #777;
    background: #0c0b0d;
    white-space: nowrap;
}

.pane-name {
    margin: 0 4px 0 3px;
}

.car {
    width: 19px;
    height: 20px;
    flex: none;
}

.grip {
    flex: 1;
    height: 8px;
    background: radial-gradient(#999 1px, transparent 1px) 0 0 / 4px 4px;
}

.mini {
    width: 14px;
    height: 14px;
    margin-left: 2px;
    padding: 0;
    border: 0;
    border-right: 1px solid #888;
    border-bottom: 1px solid #888;
    background: #080808;
    flex: none;
}

.mini svg {
    display: block;
    width: 12px;
    height: 12px;
}

.instance {
    display: flex;
    gap: 3px;
    height: 19px;
    border-bottom: 2px solid #777;
    background: #0d0d0e;
    line-height: 17px;
}

.sort {
    width: 11px;
    border-right: 1px solid #777;
}

.sort::before {
    content: "";
    display: block;
    width: 0;
    margin-top: 5px;
    border: 5px solid transparent;
    border-top: 7px solid #999;
    border-bottom: 0;
}

.tree {
    display: grid;
    grid-template-rows: repeat(9, 1fr);
    height: 166px;
    margin: 3px 0 auto;
    padding: 0;
    list-style: none;
    white-space: nowrap;
}

.tree li {
    display: flex;
    align-items: center;
    gap: 5px;
    min-height: 0;
}

.tree svg {
    width: 18px;
    height: 16px;
    flex: none;
}

.tree .mod {
    height: 14px;
}

.tree .top {
    padding-left: 6px;
    background: #403022;
}

.tree .child {
    padding-left: 27px;
}

.tree .leaf {
    padding-left: 23px;
}

.box {
    width: 12px;
    height: 12px;
    border: 1px solid #8a8468;
    background: #000;
    color: #fff;
    line-height: 10px;
    text-align: center;
    flex: none;
}

.twig {
    align-self: stretch;
    width: 17px;
    margin-right: -5px;
    background: linear-gradient(#777, #777) 6px 50% / 11px 1px no-repeat, linear-gradient(#777, #777) 6px 0 / 1px 100% no-repeat;
}

.last .twig {
    background: linear-gradient(#777, #777) 6px 50% / 11px 1px no-repeat, linear-gradient(#777, #777) 6px 0 / 1px 50% no-repeat;
}

.hscroll {
    display: flex;
    align-items: stretch;
    height: 21px;
    border-bottom: 2px solid #777;
    background: #0a0a0b;
}

.arrow {
    width: 17px;
    display: flex;
    align-items: center;
    justify-content: center;
    border-right: 1px solid #777;
    background: #060606;
}

.arrow::before {
    content: "";
    border: 5px solid transparent;
}

.arrow.left::before {
    border-right-color: #fff;
    border-left: 0;
}

.arrow.right {
    margin-left: auto;
}

.arrow.right::before {
    border-left-color: #fff;
    border-right: 0;
}

.arrow.up::before {
    border-bottom-color: #fff;
    border-top: 0;
}

.arrow.down::before {
    border-top-color: #fff;
    border-bottom: 0;
}

.thumb {
    width: 31px;
    border: 1px solid #777;
    border-top: 0;
    background: #0d0d0e;
}

.tabs {
    display: flex;
    height: 28px;
    padding-top: 2px;
    background: #39383b;
    overflow: hidden;
}

.tab {
    display: flex;
    align-items: center;
    gap: 4px;
    height: 24px;
    padding: 0 4px 0 1px;
    border: solid #eee;
    border-width: 1px 2px 2px 0;
    border-radius: 0 0 4px 4px;
    background: #39383b;
    color: #eee;
    text-decoration: none;
    white-space: nowrap;
}

.tab.current {
    padding-left: 6px;
    border-top: 0;
    background: #0a0a0b;
}

.tab svg {
    width: 18px;
    height: 18px;
}

.tab-x {
    color: #777;
    font-size: 16px;
}

.tab-nav {
    display: flex;
    height: 20px;
    margin-left: auto;
}

.tab-nav .arrow {
    width: 12px;
}

.output .tabs {
    height: 12px;
}

/* Wave pane */
.wave-pane {
    min-width: 0;
    background: #000;
    border-left: 1px solid #777;
}

.wave-title {
    display: flex;
    align-items: center;
    height: 24px;
    padding-right: 2px;
    border-top: 2px solid #4a4440;
    border-bottom: 1px solid #2a2018;
    background: #664a30;
    color: #f0e4c8;
    white-space: nowrap;
}

.output .wave-title {
    padding-right: 0;
}

.wave-title > svg {
    width: 16px;
    height: 16px;
    margin: 0 4px 0 3px;
}

.ridge {
    position: relative;
    flex: 1;
    height: 9px;
    margin: 0 3px 0 7px;
    background: linear-gradient(#e8c8b0 0 2px, #3a1a0c 2px 6px, #e8c8b0 6px 8px, #3a1a0c 8px);
}

.ridge::after {
    content: "";
    position: absolute;
    left: 49%;
    top: 0;
    width: 24px;
    height: 9px;
    background: radial-gradient(#e8d0b8 1px, #4a3020 1px) 0 0 / 4px 3px;
}

.wave-body {
    --names: 181px;
    --msgs: 114px;
    --gap: 4px;
    display: flex;
    border-left: 1px solid #39383b;
}

.outready .wave-body {
    --names: 182px;
    --msgs: 116px;
    --gap: 3px;
}

.signals {
    display: flex;
    flex-direction: column;
    width: calc(var(--names) + var(--msgs) + var(--gap) * 2);
    flex: none;
    color: #0c0c0c;
    background:
        linear-gradient(#000, #000) 0 24px / 9px 485px no-repeat,
        linear-gradient(to right, #848284 0 var(--names), #000 var(--names) calc(var(--names) + var(--gap)), #848284 0 calc(100% - var(--gap)), #000 0);
}

.signals table {
    width: calc(100% - var(--gap));
    table-layout: fixed;
    border-collapse: collapse;
}

.signals th,
.signals td {
    padding: 0 0 0 2px;
    overflow: hidden;
    font-weight: normal;
    text-align: left;
    white-space: nowrap;
}

.signals th:first-child,
.signals td:first-child {
    width: calc(var(--names) + var(--gap));
    padding-left: 8px;
}

.signals thead th {
    height: 25px;
    border-bottom: 2px solid #000;
}

.signals thead th:last-child {
    padding-right: 5px;
    text-align: right;
}

.objects {
    width: 20px;
    height: 18px;
    vertical-align: middle;
}

.signals th .drop {
    margin-left: 3px;
    vertical-align: middle;
}

.list tbody td {
    height: 19px;
    padding-top: 2px;
    line-height: 14px;
}

.signals .list tbody td:first-child {
    padding-left: 55px;
}

.list tbody td:first-child::before {
    content: "";
    display: inline-block;
    width: 18px;
    height: 18px;
    margin: -3px 5px -3px -23px;
    vertical-align: middle;
    clip-path: polygon(50% 0, 100% 50%, 50% 100%, 0 50%);
    background: linear-gradient(135deg, #5a180a 0 36%, #f4562a 36% 64%, #ffa070 64%);
}

.list {
    height: 242px;
}

.selected td {
    color: #fff;
    background: #000;
}

.end-mark {
    display: grid;
    grid-template-columns: calc(var(--names) + var(--gap) - 13px) 1fr;
    height: 267px;
    padding: 0 9px 0 13px;
    flex: none;
}

.end-mark span {
    height: 1px;
    margin-right: 8px;
    background: #fff;
}

.signals .times {
    border-top: 2px solid #000;
}

.signals .times td {
    height: 25px;
    padding: 0 10px 0 0;
    text-align: right;
}

.signals .times td:first-child {
    padding-right: 16px;
}

.signals .cursor-row td {
    height: 21px;
    color: #fff;
    background: #000;
}

.signals .times svg {
    float: left;
    width: 40px;
    height: 14px;
    margin-left: 10px;
}

.signals .cursor-row td:first-child {
    background: linear-gradient(to right, #848284 0 54px, #000 54px);
}

.scrolls {
    display: grid;
    grid-template-columns: calc(var(--names) - 7px) var(--msgs);
    gap: var(--gap);
    padding: 3px 0 2px 7px;
    border-top: 2px solid #000;
}

.scrolls .hscroll {
    height: 22px;
}

.scrolls .arrow::before {
    opacity: 0.4;
}

.output .scrolls {
    height: 13px;
    overflow: hidden;
}

.waves {
    position: relative;
    display: flex;
    flex-direction: column;
    flex: 1;
    min-width: 0;
    background: #fff;
    border-right: 3px solid #000;
}

.wave-head {
    height: 25px;
    border-bottom: 2px solid #000;
}

.plot {
    display: block;
    width: 100%;
    height: 485px;
}

.plot path {
    fill: none;
    vector-effect: non-scaling-stroke;
}

.plot .grid {
    stroke: #8a8a8a;
    stroke-width: 1px;
}

.plot .trace {
    stroke: #a850aa;
    stroke-width: 1.5px;
}

.outready .plot .trace {
    stroke: #e83ce8;
}

.plot .solid {
    fill: #f0f;
}

.plot .burst {
    fill: #e010e0;
}

.ruler {
    position: relative;
    height: 27px;
    border-top: 2px solid #000;
    border-bottom: 1px solid #888;
    color: #a030a0;
}

.outready .ruler {
    color: #e820e8;
}

.tick {
    position: absolute;
    top: 4px;
    width: 1px;
    height: 5px;
    background: currentColor;
}

.tick.major {
    top: 0;
    height: 9px;
}

.ruler .time {
    position: absolute;
    bottom: -1px;
    transform: translateX(-50%);
    line-height: 14px;
}

.cursor-track {
    display: flex;
    justify-content: center;
    height: 20px;
}

.cursor-time {
    z-index: 1;
    padding: 0 2px;
    border: 2px solid #2c4690;
    background: #fff;
    color: #24356c;
    line-height: 16px;
    white-space: nowrap;
}

.outready .cursor-time {
    border-color: #1c48e0;
    color: #1034b8;
}

.cursor-line {
    position: absolute;
    left: calc(50% - 1px);
    top: 1px;
    width: 3px;
    height: 535px;
    background: #1c36a4;
}

.outready .cursor-line {
    background: #0a38e8;
}

.wave-scroll {
    gap: 9px;
    height: 26px;
    border-top: 4px solid #111;
    background: #39383b;
}

.wave-scroll .thumb {
    width: 11px;
}

.output .wave-scroll {
    height: 12px;
}

.vscroll {
    display: flex;
    flex-direction: column;
    width: 18px;
    padding: 25px 0 76px;
    background: linear-gradient(#848284 0 22px, #0c0c0d 22px);
}

.vscroll .arrow {
    height: 18px;
    border-bottom: 2px solid #777;
}

.vscroll .down {
    margin-top: auto;
}

.vthumb {
    height: 20px;
    margin-top: 74px;
    background: #000;
}

/* Status bar */
.status {
    display: grid;
    grid-template-columns: 196px 112px 263px 1fr;
    gap: 4px;
    padding-top: 4px;
    background: #0c0c0d;
}

.status span {
    height: 20px;
    padding-left: 2px;
    overflow: hidden;
    border-left: 1px solid #666;
    border-top: 1px solid #555;
    line-height: 20px;
    white-space: nowrap;
}

.status span:first-child {
    padding-left: 6px;
    border-left: 0;
}

/* Second window */
.outready .title {
    height: 20px;
    padding-left: 0;
}

.outready .controls {
    margin-right: -4px;
}

.outready .menu {
    padding-left: 4px;
}

.outready .toolbars {
    padding-bottom: 2px;
}

.outready .row-main {
    gap: 4px;
    margin-right: 34px;
}

.outready .row-wave {
    gap: 3px;
    margin: 0 22px 0 689px;
}

.outready .plot {
    height: 488px;
}

.outready .list {
    height: 244px;
}

.outready .end-mark {
    height: 268px;
}
```

FILE: waves.js
```javascript
const svgNS = 'http://www.w3.org/2000/svg';

// Fill the parts that every window shares
function fill(selector, templateId) {
    const template = document.getElementById(templateId);
    document.querySelectorAll(selector).forEach(el => {
        el.append(template.content.cloneNode(true));
    });
}

fill('.toolbars', 'toolbar-rows');
fill('.sim-pane', 'instance-tree');
document.querySelectorAll('.tool svg').forEach(svg => svg.setAttribute('viewBox', '0 0 20 20'));

function clock(first, half, end) {
    const edges = [];
    for (let x = first; x < end; x += half) edges.push(x);
    return edges;
}

// Clock cycles to x positions
const cycles = list => list.map(n => 10.7 + n * 20.77);

// Each signal: start level and the x positions where it toggles
const plots = {
    output: {
        width: 1060, height: 485, start: 4, end: 1057, high: 5, low: 19, step: 19.5,
        grid: { first: 65.4, step: 79.75, count: 13 },
        ruler: { first: 18.5, step: 31.9, major: 4, labels: { 9: '11200000000 ps', 19: '11220000000 ps', 29: '11240000000 ps' } },
        signals: [
            { level: 0, edges: clock(10.7, 10.385, 1055) },
            { solid: true },
            { level: 0, edges: [] },
            { level: 0, edges: cycles([8, 9, 24, 25, 40, 41]) },
            { level: 1, edges: [] },
            { level: 0, edges: cycles([0, 6, 9, 10, 17, 18, 19, 20, 22, 23, 32, 34, 35, 36, 38, 40, 41, 42, 44, 45, 46, 47, 48, 49]) },
            { level: 1, edges: cycles([0, 5, 6, 10, 14, 16, 18, 19, 20, 22, 23, 24, 25, 26, 29, 30, 31, 32, 33, 35, 36, 38, 43, 44, 45, 46, 47]) },
            { level: 1, edges: [184, 530, 841.4, 862], bursts: [[184, 192], [193, 195], [196, 199], [516, 519], [520, 528], [849, 853], [854, 858], [859, 863]] },
            { level: 0, edges: [199, 509.2, 841.4, 862], bursts: [[184, 191], [192, 195], [196, 199], [516, 519], [520, 522], [523, 528], [847, 850], [851, 853], [854, 856], [857, 863]] },
            { level: 1, edges: [] },
            { level: 0, edges: cycles([8, 9.1, 24, 25, 40, 41.1]) }
        ]
    },
    outready: {
        width: 1067, height: 488, start: 5, end: 1063, high: 6, low: 20, step: 19.65,
        grid: { first: 24.6, step: 64.2, count: 17 },
        ruler: { first: 13, step: 25.66, major: 3, labels: { 3: '98492000000 ps', 13: '98496000000 ps', 23: '98500000000 ps', 33: '98504000000 ps' } },
        signals: [
            { level: 0, edges: clock(32, 41.75, 1062) },
            { solid: true },
            { level: 0, edges: [] },
            { level: 0, edges: [533, 615] },
            { level: 0, edges: [534, 621] },
            { level: 0, edges: [] },
            { level: 1, edges: [533, 553, 555, 557, 560, 562, 564, 566, 569, 573, 576, 580, 583, 591, 597, 599, 602, 606, 613, 615, 617] },
            { level: 1, edges: [] },
            { level: 0, edges: [] },
            { level: 0, edges: [32, 282, 950, 1034] },
            { level: 1, edges: [] }
        ]
    }
};

function addPath(svg, cls, d) {
    const path = document.createElementNS(svgNS, 'path');
    path.setAttribute('class', cls);
    path.setAttribute('d', d);
    svg.append(path);
}

function drawPlot(svg, plot) {
    svg.setAttribute('viewBox', `0 0 ${plot.width} ${plot.height}`);

    for (let i = 0; i < plot.grid.count; i++) {
        addPath(svg, 'grid', `M${Math.round(plot.grid.first + i * plot.grid.step) + 0.5} 0V${plot.height}`);
    }

    plot.signals.forEach((signal, row) => {
        const high = plot.high + row * plot.step;
        const low = plot.low + row * plot.step;
        if (signal.solid) {
            addPath(svg, 'solid', `M${plot.start - 1} ${high}H${plot.end}V${low}H${plot.start - 1}z`);
            return;
        }
        let level = signal.level;
        let d = `M${plot.start} ${level ? high : low}`;
        signal.edges.forEach(x => {
            level = 1 - level;
            d += `H${x}V${level ? high : low}`;
        });
        addPath(svg, 'trace', d + `H${plot.end}`);
        (signal.bursts || []).forEach(([from, to]) => {
            addPath(svg, 'burst', `M${from} ${high}H${to}V${low}H${from}z`);
        });
    });
}

function drawRuler(el, plot) {
    const { first, step, major, labels } = plot.ruler;
    for (let i = 0; first + i * step < plot.width - 5; i++) {
        const left = (first + i * step) / plot.width * 100 + '%';
        const tick = document.createElement('span');
        tick.className = i % 5 === major ? 'tick major' : 'tick';
        tick.style.left = left;
        el.append(tick);
        if (labels[i]) {
            const time = document.createElement('span');
            time.className = 'time';
            time.textContent = labels[i];
            time.style.left = left;
            el.append(time);
        }
    }
}

document.querySelectorAll('[data-plot]').forEach(svg => drawPlot(svg, plots[svg.dataset.plot]));
document.querySelectorAll('[data-ruler]').forEach(el => drawRuler(el, plots[el.dataset.ruler]));
```
